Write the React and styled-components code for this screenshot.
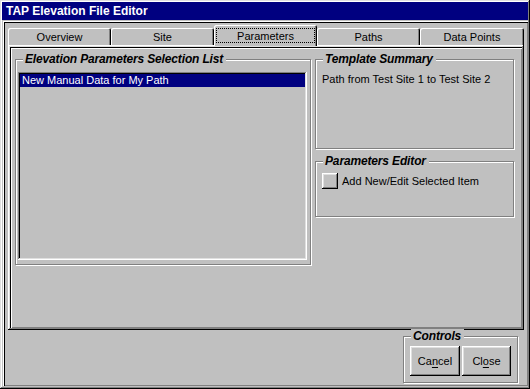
import React from "react";
import styled, { createGlobalStyle } from "styled-components";

const GlobalStyle = createGlobalStyle`
  html, body {
    margin: 0;
    padding: 0;
    background: #c0c0c0;
  }
  body {
    font-family: "Liberation Sans", Arial, sans-serif;
    font-size: 11px;
    color: #000;
  }
`;

const raised = `
  box-shadow: inset -1px -1px #000, inset 1px 1px #fff,
    inset -2px -2px #808080, inset 2px 2px #dfdfdf;
`;

const Window = styled.div`
  box-sizing: border-box;
  width: 530px;
  height: 389px;
  padding: 2px;
  background: #c0c0c0;
  display: flex;
  flex-direction: column;
  box-shadow: inset -1px -1px #000, inset 1px 1px #dfdfdf,
    inset -2px -2px #808080, inset 2px 2px #fff;
`;

const TitleBar = styled.div`
  height: 18px;
  line-height: 18px;
  padding-left: 4px;
  background: #000080;
  color: #fff;
  font-size: 12px;
  font-weight: bold;
`;

const Client = styled.div`
  flex: 1;
  margin: 1px 0 1px 1px;
  padding: 4px 4px 0 5px;
  display: flex;
  flex-direction: column;
  box-shadow: inset 1px 1px #fff, inset 2px 2px #000, inset -1px -1px #808080;
`;

const TabStrip = styled.div`
  display: flex;
  align-items: flex-end;
  height: 20px;
  position: relative;
  z-index: 1;
`;

const Tab = styled.div`
  box-sizing: border-box;
  width: ${(p) => p.$w || 103}px;
  height: ${(p) => (p.$active ? 21 : 17)}px;
  margin-bottom: ${(p) => (p.$active ? -1 : 0)}px;
  padding: ${(p) => (p.$active ? "3px 2px 3px" : "0 2px")};
  display: flex;
  align-items: center;
  justify-content: center;
  background: #c0c0c0;
  border-radius: 2px 2px 0 0;
  box-shadow: inset 1px 1px #fff, inset -1px 0 #000, inset -2px 0 #808080;
`;

const TabLabel = styled.span`
  flex: 1;
  align-self: stretch;
  display: flex;
  align-items: center;
  justify-content: center;
  outline: ${(p) => (p.$focus ? "1px dotted #000" : "none")};
  outline-offset: -1px;
`;

const TabBody = styled.div`
  box-sizing: border-box;
  height: 285px;
  padding: 2px;
  ${raised}
`;

const Page = styled.div`
  box-sizing: border-box;
  height: 100%;
  padding: 6px 8px 0 5px;
  display: flex;
  gap: 4px;
  box-shadow: inset 1px 1px #000, inset 2px 2px #fff, inset -1px -1px #808080;
`;

const RightColumn = styled.div`
  display: flex;
  flex-direction: column;
  gap: 6px;
  width: 199px;
`;

const Group = styled.div`
  box-sizing: border-box;
  position: relative;
  width: ${(p) => p.$w}px;
  height: ${(p) => p.$h}px;
  margin-top: 6px;
  padding: ${(p) => p.$pad || "12px 3px 4px 2px"};
  border: 1px solid #808080;
  box-shadow: inset 1px 1px #fff, 1px 1px #fff;
`;

const Legend = styled.span`
  position: absolute;
  top: -8px;
  left: 7px;
  padding: 0 3px 0 2px;
  background: #c0c0c0;
  font-size: 12px;
  line-height: 14px;
  font-weight: bold;
  font-style: italic;
  letter-spacing: -0.15px;
`;

const ListBox = styled.div`
  box-sizing: border-box;
  height: 188px;
  padding: 2px;
  box-shadow: inset -1px -1px #fff, inset 1px 1px #808080,
    inset -2px -2px #dfdfdf, inset 2px 2px #000;
`;

const ListItem = styled.div`
  height: 13px;
  line-height: 13px;
  padding-left: 2px;
  background: ${(p) => (p.$selected ? "#000080" : "transparent")};
  color: ${(p) => (p.$selected ? "#fff" : "#000")};
`;

const Summary = styled.div`
  padding: 0 0 0 4px;
  line-height: 13px;
`;

const OptionRow = styled.div`
  display: flex;
  align-items: center;
  gap: 4px;
  padding: 0 0 0 4px;
`;

const SmallButton = styled.div`
  width: 16px;
  height: 16px;
  background: #c0c0c0;
  ${raised}
`;

const Footer = styled.div`
  flex: 1;
  display: flex;
  justify-content: flex-end;
  padding-right: 6px;
`;

const ButtonRow = styled.div`
  display: flex;
  gap: 2px;
`;

const Button = styled.div`
  box-sizing: border-box;
  width: ${(p) => p.$w}px;
  height: 30px;
  display: flex;
  align-items: center;
  justify-content: center;
  font-size: 11px;
  ${raised}

  u {
    text-decoration: underline;
    text-underline-offset: 2px;
  }
`;

const tabs = [
  { label: "Overview" },
  { label: "Site" },
  { label: "Parameters", active: true },
  { label: "Paths" },
  { label: "Data Points", w: 104 },
];

export default function App() {
  return (
    <>
      <GlobalStyle />
      <Window>
        <TitleBar>TAP Elevation File Editor</TitleBar>
        <Client>
          <TabStrip>
            {tabs.map((t) => (
              <Tab key={t.label} $active={t.active} $w={t.w}>
                <TabLabel $focus={t.active}>{t.label}</TabLabel>
              </Tab>
            ))}
          </TabStrip>
          <TabBody>
            <Page>
              <Group $w={297} $h={206}>
                <Legend>Elevation Parameters Selection List</Legend>
                <ListBox>
                  <ListItem $selected>New Manual Data for My Path</ListItem>
                </ListBox>
              </Group>
              <RightColumn>
                <Group $w={199} $h={90} $pad="13px 4px 4px 2px">
                  <Legend>Template Summary</Legend>
                  <Summary>Path from Test Site 1 to Test Site 2</Summary>
                </Group>
                <Group $w={199} $h={56} $pad="11px 4px 4px 2px">
                  <Legend>Parameters Editor</Legend>
                  <OptionRow>
                    <SmallButton />
                    <span>Add New/Edit Selected Item</span>
                  </OptionRow>
                </Group>
              </RightColumn>
            </Page>
          </TabBody>
          <Footer>
            <Group $w={115} $h={47} $pad="9px 6px 4px 6px">
              <Legend>Controls</Legend>
              <ButtonRow>
                <Button $w={51}>
                  Ca<u>n</u>cel
                </Button>
                <Button $w={50}>
                  Cl<u>o</u>se
                </Button>
              </ButtonRow>
            </Group>
          </Footer>
        </Client>
      </Window>
    </>
  );
}
